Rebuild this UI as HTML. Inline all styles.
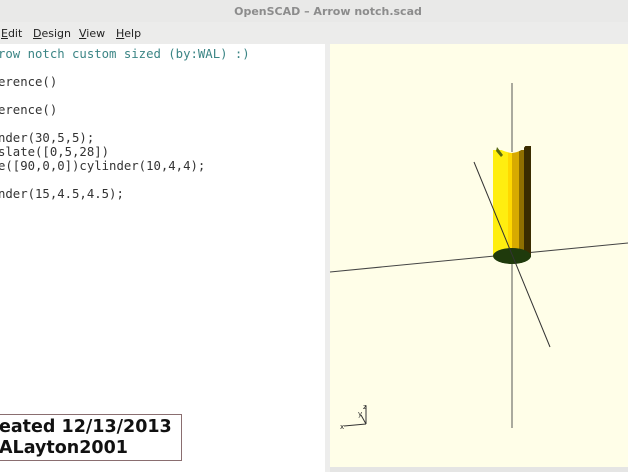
<!DOCTYPE html>
<html><head><style>
body{margin:0;width:628px;height:472px;overflow:hidden;background:#fff;font-family:"Liberation Sans",sans-serif;position:relative}
.t{position:absolute;left:0;top:0;width:628px;height:22px;background:#e9e9e8;}
.t span{position:absolute;left:0;width:656px;text-align:center;top:5px;font-size:11px;color:#8c8c8c;font-family:"DejaVu Sans",sans-serif;font-weight:bold}
.m{position:absolute;left:0;top:22px;width:628px;height:22px;background:#ececeb;font-family:"DejaVu Sans",sans-serif;font-size:11px;color:#222}
.m span{position:absolute;top:5px}
.ed{position:absolute;left:0;top:44px;width:325px;height:428px;background:#fff}
.sep{position:absolute;left:325px;top:44px;width:5px;height:428px;background:#ededec}
pre{position:absolute;left:-2px;top:47px;margin:0;font-family:"DejaVu Sans Mono",monospace;font-size:12.3px;line-height:14px;color:#333}
.c{color:#3b8585}
.v{position:absolute;left:330px;top:44px;width:298px;height:423px;background:#fffee8}
.bot{position:absolute;left:330px;top:467px;width:298px;height:5px;background:#e5e5e4}
.box{position:absolute;left:-2px;top:414px;width:182px;height:45px;border:1px solid #8a6e70;background:#fff;font-family:"DejaVu Sans",sans-serif;font-weight:bold;font-size:17.5px;line-height:21px;color:#111;padding-left:0}
</style></head><body>
<div class="t"><span>OpenSCAD – Arrow notch.scad</span></div>
<div class="m"><span style="left:1px"><u>E</u>dit</span><span style="left:33px"><u>D</u>esign</span><span style="left:79px"><u>V</u>iew</span><span style="left:116px"><u>H</u>elp</span></div>
<div class="ed"></div>
<pre><span class="c">row notch custom sized (by:WAL) :)</span>

erence()

erence()

nder(30,5,5);
slate([0,5,28])
e([90,0,0])cylinder(10,4,4);

nder(15,4.5,4.5);</pre>
<div class="box"><div style="margin-top:2px">eated 12/13/2013</div><div>ALayton2001</div></div>
<div class="sep"></div>
<div class="v"></div>
<div class="bot"></div>
<svg style="position:absolute;left:0;top:0" width="628" height="472">
<line x1="512" y1="83" x2="512" y2="428" stroke="#555" stroke-width="1"/>
<line x1="330" y1="272" x2="628" y2="243" stroke="#444" stroke-width="1"/>
<rect x="493" y="150" width="15" height="107" fill="#ffee10"/>
<rect x="508" y="150" width="4" height="107" fill="#ffd800"/>
<rect x="512" y="150" width="7" height="107" fill="#d8aa00"/>
<rect x="519" y="150" width="5" height="107" fill="#8f6f00"/>
<rect x="524" y="146" width="7" height="111" fill="#3a2c00"/>
<path d="M493 140 L531 140 L531 146 L526 145 Q522 152 512 153 Q503 152 497 147 L493 150 Z" fill="#fffee8"/>
<path d="M497 147 L503 155 L501 157 L496 151 Z" fill="#5a6a10"/>
<line x1="512" y1="83" x2="512" y2="152" stroke="#555" stroke-width="1"/>
<ellipse cx="512" cy="256" rx="19" ry="8" fill="#1f3a0c"/>
<line x1="474" y1="162" x2="550" y2="347" stroke="#333" stroke-width="1"/>
<g stroke="#333" stroke-width="1" fill="none"><line x1="344" y1="426" x2="366" y2="424"/><line x1="366" y1="424" x2="366" y2="406"/><line x1="366" y1="424" x2="361" y2="415"/></g>
<g font-family="DejaVu Sans" font-size="7" fill="#222"><text x="340" y="429">x</text><text x="363" y="409">z</text><text x="358" y="416">y</text></g>
</svg>
</body></html>
